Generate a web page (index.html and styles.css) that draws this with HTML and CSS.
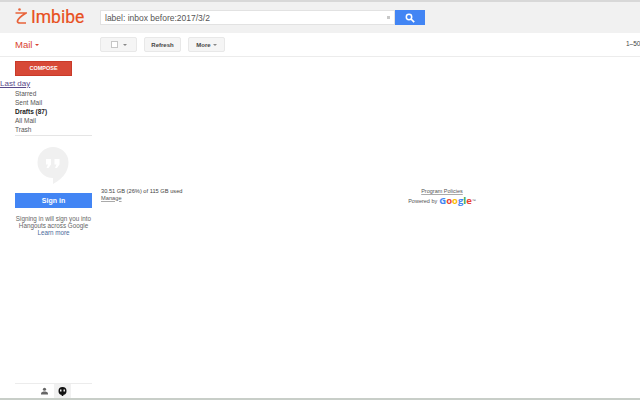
FILE: index.html
```html
<!DOCTYPE html>
<html lang="en">
  <head>
    <meta charset="UTF-8" />
    <title>Imbibe Mail</title>
    <link rel="stylesheet" href="styles.css">
  </head>
  <body>
    <header class="topbar">
      <div class="logo">
        <svg class="logo-mark" width="12" height="17" viewBox="0 0 12 17">
          <circle cx="4.500" cy="1.500" r="1.300" fill="#e8633a" />
          <path d="M0.500 5h10.500C7 7.500 3 10.500 2.500 13c-.3 1.500 1 2 2.500 2h6" fill="none" stroke="#e8633a" stroke-width="1.700" />
        </svg>
        <span class="logo-text">Imbibe</span>
      </div>
      <form class="search">
        <div class="search-input">
          <span>label: inbox before:2017/3/2</span>
          <i class="search-caret"></i>
        </div>
        <div class="search-btn">
          <svg width="10" height="10" viewBox="0 0 10 10">
            <circle cx="4" cy="4" r="2.700" fill="none" stroke="#fff" stroke-width="1.500" />
            <path d="M6 6l3.200 3.200" stroke="#fff" stroke-width="1.700" />
          </svg>
        </div>
      </form>
    </header>

    <div class="toolbar">
      <div class="mail-label">Mail <i class="caret red"></i></div>
      <div class="btn check-btn"><i class="checkbox"></i><i class="caret"></i></div>
      <div class="btn refresh-btn">Refresh</div>
      <div class="btn more-btn">More <i class="caret"></i></div>
      <div class="pager">1–50</div>
    </div>

    <div class="main">
      <aside class="sidebar">
        <div class="compose">COMPOSE</div>
        <a class="last-day" href="#">Last day</a>
        <ul class="labels">
          <li>Starred</li>
          <li>Sent Mail</li>
          <li class="bold">Drafts (87)</li>
          <li>All Mail</li>
          <li>Trash</li>
        </ul>
        <div class="hangouts">
          <svg class="bubble" width="32" height="37" viewBox="0 0 32 37">
            <path d="M16 0a15.500 15.500 0 0 0-15.500 15.500a15.500 15.500 0 0 0 15.500 15.500v6c8-4 15.500-11.500 15.500-21.500a15.500 15.500 0 0 0-15.500-15.500z" fill="#f0f0f0" />
            <path d="M9 12h5v5.500l-2.500 3.500h-2l1.500-3.500h-2zM17.500 12h5v5.500l-2.500 3.500h-2l1.500-3.500h-2z" fill="#fff" />
          </svg>
          <div class="signin">Sign in</div>
          <p class="signin-note">Signing in will sign you into Hangouts across Google</p>
          <a class="learn" href="#">Learn more</a>
        </div>
        <div class="side-tabs">
          <div class="tab">
            <svg width="7" height="8" viewBox="0 0 8 8">
              <circle cx="4" cy="2" r="1.800" fill="#666" />
              <path d="M0 8v-1.500c0-1.500 2.500-2 4-2s4 .5 4 2v1.500z" fill="#666" />
            </svg>
          </div>
          <div class="tab active">
            <svg width="9" height="9" viewBox="0 0 9 9">
              <circle cx="4.500" cy="4" r="4" fill="#111" />
              <rect x="3.700" y="2" width="1.600" height="7" fill="#111" />
              <rect x="2" y="2.500" width="1.500" height="2" fill="#eee" />
              <rect x="5.500" y="2.500" width="1.500" height="2" fill="#eee" />
            </svg>
          </div>
        </div>
      </aside>

      <section class="content">
        <div class="storage">
          <div>30.51 GB (26%) of 115 GB used</div>
          <a href="#">Manage</a>
        </div>
        <div class="policies">
          <a href="#">Program Policies</a>
          <div class="powered">Powered by <span class="google"><b class="g-blue">G</b><b class="g-red">o</b><b class="g-yellow">o</b><b class="g-blue">g</b><b class="g-green">l</b><b class="g-red">e</b></span><small>™</small></div>
        </div>
      </section>
    </div>
  </body>
</html>
```

FILE: styles.css
```css
* {
  box-sizing: border-box;
}
html,
body {
  height: 100%;
}
body {
  margin: 0;
  display: flex;
  flex-direction: column;
  overflow: hidden;
  background: #fff;
  color: #444;
  font-family: 'Liberation Sans', Arial, sans-serif;
  font-size: 7px;
  border-bottom: 2px solid #c8cec8;
}
a {
  color: #555;
  text-decoration-color: #aaa;
}

.topbar {
  display: flex;
  align-items: center;
  height: 33px;
  background: #f1f1f1;
  border-top: 2px solid #d8d8d8;
}
.logo {
  display: flex;
  align-items: center;
  gap: 4px;
  width: 100px;
  padding: 0 0 2px 15px;
}
.logo-text {
  color: #e8501e;
  font-family: Roboto, sans-serif;
  font-size: 17.500px;
  line-height: 18px;
  -webkit-text-stroke: 0.2px #e8501e;
}
.search {
  display: flex;
  height: 15px;
}
.search-input {
  display: flex;
  align-items: center;
  justify-content: space-between;
  width: 295px;
  padding: 0 4px;
  background: #fff;
  border: 1px solid #e2e2e2;
  color: #555;
  font-size: 8.500px;
}
.search-caret {
  width: 3px;
  height: 3px;
  background: #c8c8c8;
}
.search-btn {
  display: flex;
  align-items: center;
  justify-content: center;
  width: 30px;
  background: #4285f4;
}

.toolbar {
  display: flex;
  align-items: center;
  height: 24px;
  border-bottom: 1px solid #ececec;
}
.mail-label {
  width: 100px;
  padding-left: 15px;
  color: #d9442f;
  font-size: 9.500px;
}
.btn {
  display: flex;
  align-items: center;
  justify-content: center;
  width: 37px;
  height: 15px;
  margin-right: 7px;
  background: #f5f5f5;
  border: 1px solid #e8e8e8;
  border-radius: 2px;
  color: #444;
  font-size: 6px;
  font-weight: bold;
}
.check-btn {
  gap: 5px;
}
.more-btn {
  gap: 2px;
}
.checkbox {
  width: 7px;
  height: 7px;
  background: #fff;
  border: 1px solid #c6c6c6;
}
.caret {
  display: inline-block;
  width: 0;
  height: 0;
  border-top: 2px solid #888;
  border-left: 2px solid transparent;
  border-right: 2px solid transparent;
  vertical-align: middle;
}
.caret.red {
  border-top-color: #d9442f;
}
.pager {
  margin-left: auto;
  white-space: nowrap;
  width: 14px;
  overflow: hidden;
  padding-bottom: 2px;
  color: #444;
  font-size: 6.500px;
}

.main {
  display: flex;
  flex: 1;
  min-height: 0;
}
.sidebar {
  display: flex;
  flex-direction: column;
  width: 100px;
  flex: none;
}
.compose {
  width: 57px;
  height: 15px;
  margin: 4px 0 0 15px;
  background: #d74937;
  border: 1px solid #c93a29;
  color: #fff;
  font-size: 5.500px;
  font-weight: bold;
  line-height: 13px;
  text-align: center;
}
.last-day {
  margin-top: 2px;
  color: #5a4a8a;
  text-decoration-color: #5a4a8a;
  font-size: 8px;
  line-height: 11px;
}
.labels {
  width: 77px;
  margin: 0 0 0 15px;
  padding: 0 0 1px;
  list-style: none;
  border-bottom: 1px solid #e5e5e5;
  font-size: 6.500px;
  line-height: 9px;
  color: #555;
}
.labels .bold {
  font-weight: bold;
  color: #222;
}
.hangouts {
  display: flex;
  flex-direction: column;
  align-items: center;
  width: 77px;
  margin: 11px 0 0 15px;
  text-align: center;
}
.bubble {
  margin-left: -1px;
}
.signin {
  width: 77px;
  height: 15px;
  margin-top: 9px;
  background: #4285f4;
  color: #fff;
  font-size: 7px;
  font-weight: bold;
  line-height: 15px;
}
.signin-note {
  margin: 7px 0 0;
  font-size: 6.300px;
  line-height: 7px;
  color: #666;
}
.learn {
  font-size: 6.300px;
  line-height: 7px;
  text-decoration: none;
  color: #4a6a9a;
}
.side-tabs {
  display: flex;
  width: 77px;
  height: 15px;
  margin: auto 0 0 15px;
  padding-left: 19px;
  border-top: 1px solid #ececec;
}
.tab {
  display: flex;
  align-items: center;
  justify-content: center;
  width: 20px;
}
.tab.active {
  width: 17px;
  background: #f1f1f1;
}

.content {
  display: flex;
  align-items: flex-start;
  flex: 1;
  padding-top: 131px;
  padding-left: 1px;
}
.storage {
  width: 194px;
  font-size: 5.700px;
  line-height: 6.500px;
  color: #444;
}
.policies {
  width: 120px;
  margin-left: 87px;
  text-align: center;
  font-size: 5.500px;
}
.policies a {
  display: block;
  line-height: 6px;
}
.powered {
  display: flex;
  align-items: center;
  justify-content: center;
  height: 13px;
  gap: 2px;
  font-size: 5.500px;
  color: #555;
}
.powered small {
  margin-left: -2px;
  font-size: 4px;
}
.google b {
  font-family: 'Open Sans', sans-serif;
  font-size: 9.500px;
  font-weight: 700;
}
.g-blue {
  color: #4285f4;
}
.g-red {
  color: #ea4335;
}
.g-yellow {
  color: #fbbc05;
}
.g-green {
  color: #34a853;
}
```
